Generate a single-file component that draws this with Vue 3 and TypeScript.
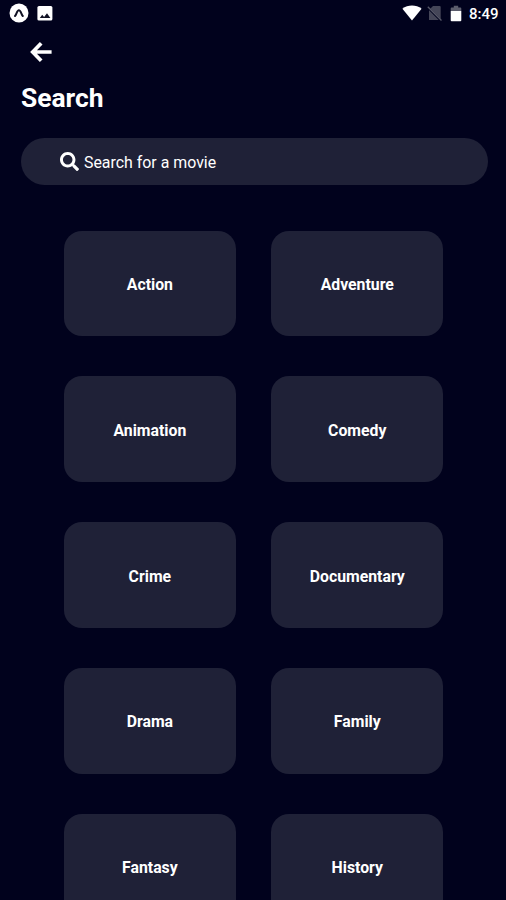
<script setup lang="ts">
const genres: string[] = [
  'Action', 'Adventure', 'Animation', 'Comedy', 'Crime',
  'Documentary', 'Drama', 'Family', 'Fantasy', 'History',
]
</script>

<template>
  <main class="screen">
    <div class="status-bar">
      <svg class="app-badge" viewBox="0 0 20 20" aria-hidden="true">
        <circle cx="10" cy="10" r="9.5" fill="#fff" />
        <path d="M6 13 C7.5 11.4 8 7.2 9.9 7.2 C11.8 7.2 12.3 11.4 13.8 13" fill="none" stroke="#111224" stroke-width="2" stroke-linecap="round" />
      </svg>
      <svg class="image-icon" viewBox="0 0 16 16" aria-hidden="true">
        <rect x=".4" y=".9" width="15" height="14.6" rx="1.6" fill="#fff" />
        <path d="M2.8 13 5.2 9.8l1.9 2.1 2.9-3.6 3.4 4.7z" fill="#111224" />
      </svg>
      <span class="spacer"></span>
      <svg class="wifi" viewBox="0 0 20 16" aria-hidden="true">
        <path d="M.4 3.7C5.8-.6 14.2-.6 19.6 3.7L10 15.6z" fill="#fff" />
      </svg>
      <svg class="sim" viewBox="0 0 16 16" aria-hidden="true">
        <path d="M6 1h6.7q1 0 1 1v12.9H2V5z" fill="#454658" />
        <path d="M1 2.8 14.2 16" stroke="#01021d" stroke-width="2" />
        <path d="M.8 1.8 14.5 15.5" stroke="#565767" stroke-width="1.3" />
      </svg>
      <svg class="battery" viewBox="0 0 12 17" aria-hidden="true">
        <path d="M3.8.8h4.4v1.7h2.2q.9 0 .9.9V6H.7V3.4q0-.9.9-.9h2.2z" fill="#5c5d6c" />
        <path d="M.7 6h10.6v9.3q0 .9-.9.9H1.6q-.9 0-.9-.9z" fill="#fff" />
      </svg>
      <time class="clock">8:49</time>
    </div>

    <button class="back" aria-label="Back">
      <svg viewBox="0 0 22 22" aria-hidden="true">
        <path d="M11.2 2.3 2.7 11l8.5 8.7M3 11h18.6" fill="none" stroke="#fff" stroke-width="3.7" />
      </svg>
    </button>
    <h1 class="title">Search</h1>

    <div class="search">
      <svg viewBox="0 0 512 512" aria-hidden="true">
        <path d="M505 442.7L405.3 343c-4.5-4.5-10.6-7-17-7H372c27.6-35.3 44-79.7 44-128C416 93.1 322.9 0 208 0S0 93.1 0 208s93.1 208 208 208c48.3 0 92.7-16.4 128-44v16.3c0 6.4 2.5 12.5 7 17l99.7 99.7c9.4 9.4 24.6 9.4 33.9 0l28.3-28.3c9.4-9.4 9.4-24.6.1-34zM208 336c-70.7 0-128-57.2-128-128 0-70.7 57.2-128 128-128 70.7 0 128 57.2 128 128 0 70.7-57.2 128-128 128z" fill="#fff" />
      </svg>
      <span>Search for a movie</span>
    </div>

    <section class="genres">
      <button v-for="genre in genres" :key="genre" class="genre">{{ genre }}</button>
    </section>
  </main>
</template>

<style>
body {
  margin: 0;
  background: #01021d;
}
</style>

<style scoped>
.screen {
  box-sizing: border-box;
  width: 100%;
  height: 900px;
  overflow: hidden;
  background: #01021d;
  color: #fff;
  font-family: Roboto, sans-serif;
}

svg {
  display: block;
  flex: none;
}

button {
  padding: 0;
  border: 0;
  color: inherit;
  font: inherit;
}

.status-bar {
  display: flex;
  align-items: center;
  height: 26px;
  padding: 0 8px 0 9px;
}

.app-badge {
  width: 20px;
  height: 20px;
}

.image-icon {
  width: 16px;
  height: 16px;
  margin-left: 8px;
}

.spacer {
  flex: 1;
}

.wifi {
  width: 20px;
  height: 16px;
}

.sim {
  width: 16px;
  height: 16px;
  margin-left: 5px;
}

.battery {
  width: 12px;
  height: 17px;
  margin: 1px 0 0 7px;
}

.clock {
  width: 29px;
  margin-left: 7px;
  padding-top: 1px;
  font-size: 15px;
  font-weight: 500;
  line-height: 26px;
  white-space: nowrap;
}

.back {
  display: block;
  margin: 15px 0 0 30px;
  background: none;
}

.back svg {
  width: 22px;
  height: 22px;
}

.title {
  margin: 19px 0 0 21px;
  font-size: 26.4px;
  font-weight: 700;
  line-height: 32px;
}

.search {
  display: flex;
  align-items: center;
  gap: 5px;
  box-sizing: border-box;
  height: 47px;
  margin: 24px 18px 0 21px;
  padding-left: 39px;
  border-radius: 24px;
  background: #1f2137;
  font-size: 15.9px;
}

.search span {
  padding-top: 1px;
}

.search svg {
  width: 19px;
  height: 19px;
}

.genres {
  display: grid;
  grid-template-columns: repeat(2, 172.4px);
  grid-auto-rows: 105.5px;
  gap: 40.4px 35px;
  margin: 45.5px 0 0 63.7px;
}

.genre {
  padding-top: 3px;
  border-radius: 18px;
  background: #1f2137;
  font-size: 15.8px;
  font-weight: 700;
  line-height: 20px;
}
</style>
